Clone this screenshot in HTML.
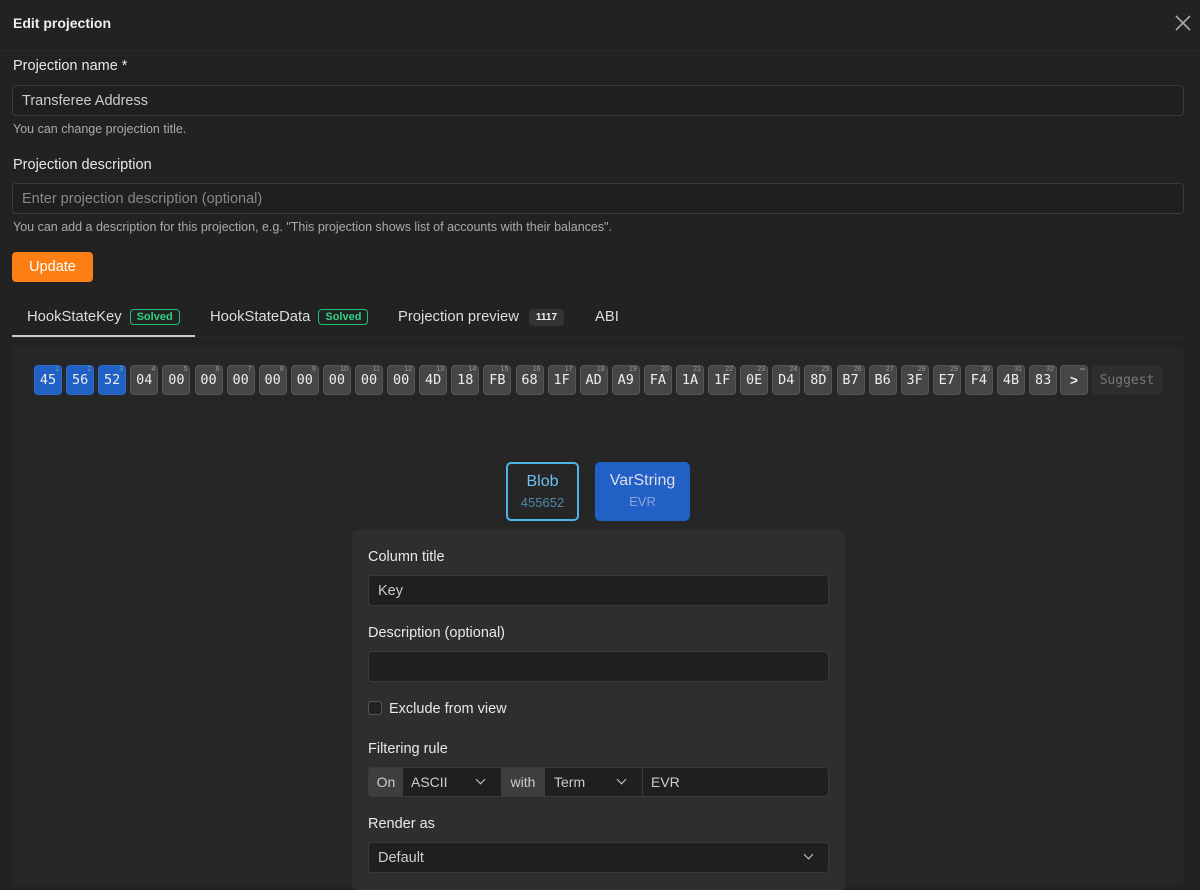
<!DOCTYPE html><html><head><style>
*{box-sizing:border-box;margin:0;padding:0}
body{width:1200px;height:884px;overflow:hidden;background:#222;font-family:"Liberation Sans",sans-serif;color:#ddd;font-size:14px;position:relative}
.a{position:absolute}
.lbl{font-size:14.5px;color:#e8e8e8}
.inp{position:absolute;background:#1f1f1f;border:1px solid #3a3a3a;border-radius:4px;color:#ccc;font-size:14.5px;padding-left:9px;display:flex;align-items:center}
.hint{font-size:12.5px;color:#aaa}
.cell{position:absolute;top:365px;width:28px;height:30px;border-radius:4px;background:#464646;border:1px solid #555;color:#eee;font-family:"DejaVu Sans Mono",monospace;font-size:13.5px;display:flex;align-items:center;justify-content:center}
.cell.b{background:#2160c4;border-color:#2a6ad4}
.cell i{position:absolute;top:0;right:2px;font-size:7px;color:#999;font-style:normal;font-family:"Liberation Sans",sans-serif}
.badge{display:inline-block;border:1px solid #1dbf73;color:#2fd184;border-radius:4px;font-size:11px;font-weight:bold;padding:1px 6px;margin-left:8px;vertical-align:1px}
.chev{position:absolute;width:7px;height:7px;border-right:1.5px solid #ccc;border-bottom:1.5px solid #ccc;transform:rotate(45deg)}
.tab{font-size:14.8px;color:#ddd}
</style></head><body>
<div class="a" style="left:13px;top:15px;font-weight:bold;font-size:14px;color:#eee">Edit projection</div>
<svg class="a" style="left:1175px;top:15px" width="16" height="16"><path d="M1 1L15 15M15 1L1 15" stroke="#aaa" stroke-width="1.6"/></svg>
<div class="a" style="left:0;top:50px;width:1200px;height:1px;background:#1e2a38"></div>
<div class="a lbl" style="left:13px;top:58px">Projection name *</div>
<div class="inp" style="left:12px;top:85px;width:1172px;height:31px">Transferee Address</div>
<div class="a hint" style="left:13px;top:122px">You can change projection title.</div>
<div class="a lbl" style="left:13px;top:157px">Projection description</div>
<div class="inp" style="left:12px;top:183px;width:1172px;height:31px;color:#888">Enter projection description (optional)</div>
<div class="a hint" style="left:13px;top:220px">You can add a description for this projection, e.g. "This projection shows list of accounts with their balances".</div>
<div class="a" style="left:12px;top:252px;width:81px;height:30px;background:#fd7e14;border-radius:4px;color:#fff;display:flex;align-items:center;justify-content:center;font-size:14.5px">Update</div>
<div class="a" style="left:12px;top:337px;width:1172px;height:1px;background:#2c2c2c"></div>
<div class="a" style="left:12px;top:335px;width:183px;height:2px;background:#ccc"></div>
<div class="a tab" style="left:27px;top:309px">HookStateKey<span class="badge">Solved</span></div>
<div class="a tab" style="left:210px;top:309px">HookStateData<span class="badge">Solved</span></div>
<div class="a tab" style="left:398px;top:309px">Projection preview<span style="display:inline-block;background:#333;border-radius:4px;font-size:10px;font-weight:bold;padding:3px 7px;margin-left:10px;vertical-align:1px;color:#eee">1117</span></div>
<div class="a tab" style="left:595px;top:309px">ABI</div>
<div class="a" style="left:12px;top:346px;width:1172px;height:540px;background:#262626;border-radius:6px"></div>
<div id="cells"></div>
<div class="cell" style="left:1060px;font-family:'Liberation Sans';font-weight:bold">&gt;<i>∞</i></div>
<div class="a" style="left:1092px;top:365px;width:70px;height:30px;background:#2e2e2e;border-radius:4px;color:#777;font-family:'DejaVu Sans Mono',monospace;font-size:13px;display:flex;align-items:center;justify-content:center">Suggest</div>
<div class="a" style="left:506px;top:462px;width:73px;height:59px;border:2px solid #4fb3e8;border-radius:5px;text-align:center;padding-top:9px"><div style="color:#6cc0f0;font-size:16px">Blob</div><div style="color:#4e87a5;font-size:13px;margin-top:4px">455652</div></div>
<div class="a" style="left:595px;top:462px;width:95px;height:59px;background:#2160c4;border-radius:5px;text-align:center;padding-top:10px"><div style="color:#dde;font-size:16px">VarString</div><div style="color:#8aa7d8;font-size:13px;margin-top:4px">EVR</div></div>
<div class="a" style="left:352px;top:530px;width:493px;height:360px;background:#2e2e2e;border-radius:5px"></div>
<div class="a lbl" style="left:368px;top:549px">Column title</div>
<div class="inp" style="left:368px;top:575px;width:461px;height:31px">Key</div>
<div class="a lbl" style="left:368px;top:625px">Description (optional)</div>
<div class="inp" style="left:368px;top:651px;width:461px;height:31px"></div>
<div class="a" style="left:368px;top:701px;width:14px;height:14px;border:1px solid #555;border-radius:3px;background:#222"></div>
<div class="a lbl" style="left:389px;top:701px">Exclude from view</div>
<div class="a lbl" style="left:368px;top:741px">Filtering rule</div>
<div class="inp" style="left:368px;top:767px;width:461px;height:30px;padding:0"></div>
<div class="a" style="left:369px;top:768px;width:34px;height:28px;background:#3e3e3e;color:#ccc;display:flex;align-items:center;justify-content:center">On</div>
<div class="a" style="left:411px;top:774px;color:#ccc">ASCII</div><div class="chev" style="left:477px;top:776px"></div>
<div class="a" style="left:501px;top:768px;width:44px;height:28px;background:#3e3e3e;color:#ccc;display:flex;align-items:center;justify-content:center">with</div>
<div class="a" style="left:554px;top:774px;color:#ccc">Term</div><div class="chev" style="left:618px;top:776px"></div>
<div class="a" style="left:642px;top:768px;width:1px;height:28px;background:#3a3a3a"></div>
<div class="a" style="left:651px;top:774px;color:#ccc">EVR</div>
<div class="a lbl" style="left:368px;top:816px">Render as</div>
<div class="inp" style="left:368px;top:842px;width:461px;height:31px">Default</div><div class="chev" style="left:805px;top:851px"></div>
<script>
var v="45 56 52 04 00 00 00 00 00 00 00 00 4D 18 FB 68 1F AD A9 FA 1A 1F 0E D4 8D B7 B6 3F E7 F4 4B 83".split(" "),h="";
v.forEach(function(t,i){h+='<div class="cell'+(i<3?' b':'')+'" style="left:'+(34+i*32.1)+'px">'+t+'<i>'+(i+1)+'</i></div>'});
document.getElementById("cells").innerHTML=h;
</script>
</body></html>
